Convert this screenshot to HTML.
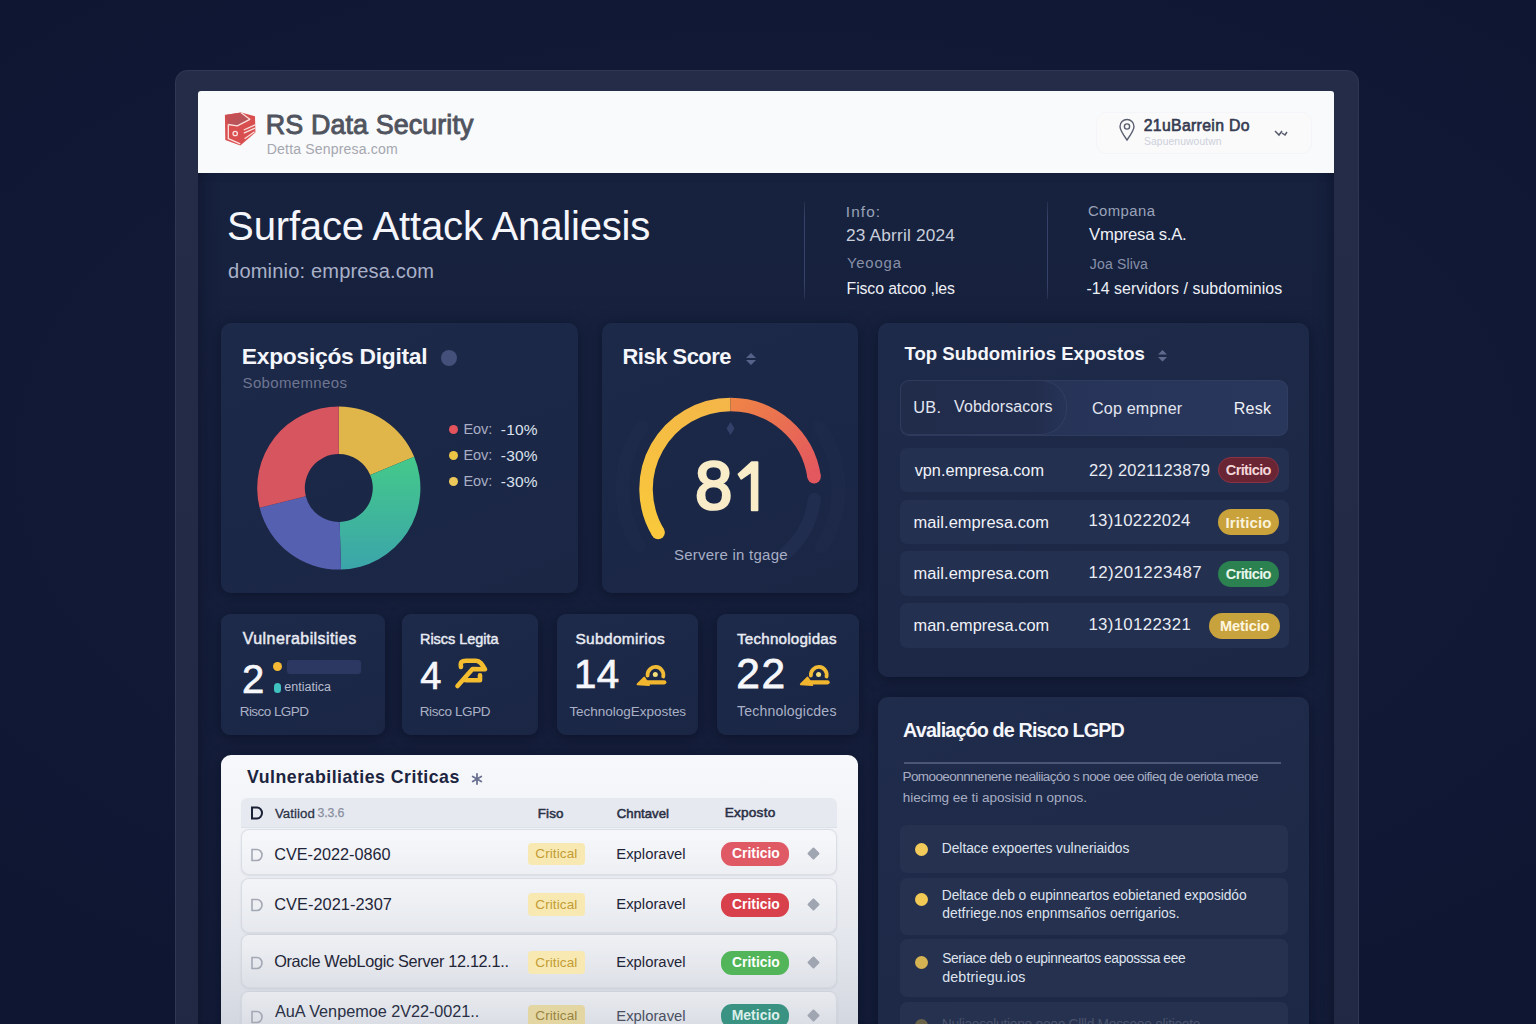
<!DOCTYPE html>
<html><head><meta charset="utf-8">
<style>
*{margin:0;padding:0;box-sizing:border-box}
html,body{width:1536px;height:1024px;overflow:hidden}
body{background:#0f1631;font-family:"Liberation Sans",sans-serif;position:relative}
.a{position:absolute;white-space:nowrap;line-height:1}
.b{position:absolute}
.card{position:absolute;border-radius:10px;background:#1b2745;box-shadow:0 2px 14px rgba(6,10,26,.55)}
</style></head><body>
<div class="b" style="left:0;top:0;width:1536px;height:1024px;background:radial-gradient(ellipse 70% 60% at 50% 45%,#131b3c 0%,#111936 60%,#0f1632 100%)"></div>
<div class="b" style="left:174.5px;top:69.5px;width:1184px;height:1010px;border-radius:12px;background:linear-gradient(180deg,#242c47 0%,#222a45 50%,#202843 100%);border:1px solid #2f3853"></div>
<div class="b" style="left:198px;top:172px;width:1135.5px;height:860px;background:linear-gradient(180deg,#17223f 0%,#16203d 40%,#141d39 100%);box-shadow:inset 12px 0 16px -8px rgba(8,12,28,.45),inset -12px 0 16px -8px rgba(8,12,28,.45)"></div>
<div class="b" style="left:198px;top:91px;width:1135.5px;height:82px;background:#f9fafb;border-radius:3px 3px 0 0"></div>
<svg class="b" style="left:218px;top:106px" width="44" height="44" viewBox="0 0 44 44">
  <defs><linearGradient id="lg1" x1="0" y1="0" x2="1" y2="1"><stop offset="0" stop-color="#d24c50"/><stop offset="1" stop-color="#a8585e"/></linearGradient></defs>
  <path d="M6.9 9 L23.2 6.4 L37 10.3 L37.4 26.6 L22.3 39.5 L7.3 34 Z" fill="#d94f50"/>
  <path d="M6.9 9 L23.2 6.4 L31.8 13.3 L19.3 19.8 L10.3 18.5 Z" fill="url(#lg1)"/>
  <g stroke="#fbe0dc" stroke-width="1.3" fill="none" stroke-linejoin="round">
  <path d="M10.3 18.5 L19.3 19.8 L31.8 13.3 L22.8 6.6"/>
  <path d="M10.3 18.5 L10.3 32.7 L22.3 37.8"/>
  <path d="M25.8 24 L37.2 18.9 M25.8 27.2 L37 22.2 M26.6 32.7 L36.5 25.8"/>
  <circle cx="17.2" cy="27.5" r="2.2"/>
  </g>
</svg>
<div class="a" style="left:265.8px;top:111.5px;font-size:26.89px;color:#50545f;-webkit-text-stroke:0.94px #50545f;letter-spacing:0.10px;">RS Data Security</div>
<div class="a" style="left:266.8px;top:142.1px;font-size:14.08px;color:#a5a7b0;letter-spacing:0.15px;">Detta Senpresa.com</div>
<div class="b" style="left:1096px;top:111.5px;width:216px;height:42px;border-radius:10px;border:1px solid rgba(228,231,237,.3);background:rgba(255,255,255,.15)"></div>
<svg class="b" style="left:1117px;top:117px" width="20" height="25" viewBox="0 0 20 25">
  <path d="M10 23 C5 16 3 13 3 9.5 A7 7 0 0 1 17 9.5 C17 13 15 16 10 23 Z" fill="none" stroke="#5a5f70" stroke-width="1.4"/>
  <circle cx="10" cy="9.5" r="2.6" fill="none" stroke="#5a5f70" stroke-width="1.4"/>
</svg>
<div class="a" style="left:1143.7px;top:117.9px;font-size:15.79px;color:#363b52;-webkit-text-stroke:0.63px #363b52;letter-spacing:0.34px;">21uBarrein Do</div>
<div class="a" style="left:1144.0px;top:137.3px;font-size:10.30px;color:#cdd0da;letter-spacing:0.12px;">Sapuenuwoutwn</div>
<svg class="b" style="left:1273px;top:126px" width="16" height="12" viewBox="0 0 16 12">
  <path d="M2 5 L6 9 L9 5 M9 7 L12 9 L14 6" fill="none" stroke="#555a6a" stroke-width="1.5"/>
</svg>
<div class="a" style="left:227.1px;top:206.8px;font-size:40.12px;color:#f4f6fb;letter-spacing:-0.21px;">Surface Attack Analiesis</div>
<div class="a" style="left:228.1px;top:261.0px;font-size:20.07px;color:#a9b1c8;letter-spacing:0.16px;">dominio: empresa.com</div>
<div class="b" style="left:804px;top:202px;width:1.2px;height:97px;background:linear-gradient(180deg,rgba(58,68,100,.4),#37426a 15%,#37426a 85%,rgba(58,68,100,.4))"></div>
<div class="b" style="left:1047px;top:202px;width:1.2px;height:97px;background:linear-gradient(180deg,rgba(58,68,100,.4),#37426a 15%,#37426a 85%,rgba(58,68,100,.4))"></div>
<div class="a" style="left:845.8px;top:203.8px;font-size:15.35px;color:#9aa2b8;letter-spacing:1.11px;">Info:</div>
<div class="a" style="left:846.0px;top:227.0px;font-size:17.29px;color:#c9cedb;letter-spacing:0.18px;">23 Abrril 2024</div>
<div class="a" style="left:846.9px;top:256.2px;font-size:14.87px;color:#8890a8;letter-spacing:0.83px;">Yeooga</div>
<div class="a" style="left:846.6px;top:280.5px;font-size:15.84px;color:#eef0f6;letter-spacing:-0.11px;">Fisco atcoo ,les</div>
<div class="a" style="left:1087.9px;top:204.1px;font-size:14.86px;color:#9aa2b8;letter-spacing:0.43px;">Compana</div>
<div class="a" style="left:1089.1px;top:227.3px;font-size:16.72px;color:#eef0f6;letter-spacing:-0.24px;">Vmpresa s.A.</div>
<div class="a" style="left:1089.8px;top:257.2px;font-size:14.00px;color:#8890a8;letter-spacing:0.16px;">Joa Sliva</div>
<div class="a" style="left:1086.5px;top:280.6px;font-size:15.95px;color:#eef0f6;letter-spacing:0.03px;">-14 servidors / subdominios</div>
<div class="card" style="left:221px;top:323px;width:357px;height:270px;background:linear-gradient(160deg,#1d2948 0%,#1b2746 60%,#1a2644 100%)"></div>
<div class="a" style="left:241.8px;top:345.4px;font-size:22.82px;color:#f4f6fb;font-weight:bold;letter-spacing:-0.27px;">Exposiçós Digital</div>
<div class="b" style="left:440.5px;top:350px;width:16px;height:16px;border-radius:50%;background:#45507a"></div>
<div class="a" style="left:242.6px;top:374.6px;font-size:15.01px;color:#6e7692;letter-spacing:0.34px;">Sobomemneos</div>
<svg class="b" style="left:0;top:0" width="1536" height="1024" viewBox="0 0 1536 1024">
<defs><linearGradient id="gg" x1="0" y1="0" x2="0" y2="1"><stop offset="0" stop-color="#44c98a"/><stop offset="1" stop-color="#3ba5aa"/></linearGradient></defs>
<path d="M338.80 406.40 A81.6 81.6 0 0 1 414.19 456.77 L370.21 474.99 A34 34 0 0 0 338.80 454.00 Z" fill="#e0b64b"/>
<path d="M414.19 456.77 A81.6 81.6 0 0 1 340.94 569.57 L339.69 521.99 A34 34 0 0 0 370.21 474.99 Z" fill="url(#gg)"/>
<path d="M340.94 569.57 A81.6 81.6 0 0 1 259.62 507.74 L305.81 496.23 A34 34 0 0 0 339.69 521.99 Z" fill="#5560b0"/>
<path d="M259.62 507.74 A81.6 81.6 0 0 1 338.80 406.40 L338.80 454.00 A34 34 0 0 0 305.81 496.23 Z" fill="#d6555f"/>
</svg>
<div class="b" style="left:448.6px;top:424.7px;width:9.6px;height:9.6px;border-radius:50%;background:#e5545c"></div>
<div class="a" style="left:463.4px;top:422.3px;font-size:14.53px;color:#a8aec4;letter-spacing:-0.06px;">Eov:</div>
<div class="a" style="left:500.8px;top:422.4px;font-size:15.48px;color:#dde2ee;letter-spacing:0.23px;">-10%</div>
<div class="b" style="left:448.6px;top:450.7px;width:9.6px;height:9.6px;border-radius:50%;background:#ecc544"></div>
<div class="a" style="left:463.4px;top:448.3px;font-size:14.53px;color:#a8aec4;letter-spacing:-0.06px;">Eov:</div>
<div class="a" style="left:500.8px;top:448.4px;font-size:15.48px;color:#dde2ee;letter-spacing:0.23px;">-30%</div>
<div class="b" style="left:448.6px;top:476.7px;width:9.6px;height:9.6px;border-radius:50%;background:#ecc85a"></div>
<div class="a" style="left:463.4px;top:474.3px;font-size:14.53px;color:#a8aec4;letter-spacing:-0.06px;">Eov:</div>
<div class="a" style="left:500.8px;top:474.4px;font-size:15.48px;color:#dde2ee;letter-spacing:0.23px;">-30%</div>
<div class="card" style="left:602px;top:323px;width:256px;height:270px;background:linear-gradient(160deg,#1d2948 0%,#1b2746 60%,#1a2644 100%)"></div>
<div class="a" style="left:622.5px;top:346.1px;font-size:21.95px;color:#f4f6fb;font-weight:bold;letter-spacing:-0.49px;">Risk Score</div>
<svg class="b" style="left:744px;top:352px" width="14" height="14" viewBox="0 0 14 14">
<path d="M7 1 L12 6 L2 6 Z M2 8 L12 8 L7 13 Z" fill="#56628a"/></svg>
<svg class="b" style="left:0;top:0" width="1536" height="1024" viewBox="0 0 1536 1024">
<defs>
<linearGradient id="g1" gradientUnits="userSpaceOnUse" x1="658.1" y1="532.5" x2="730.5" y2="404.5"><stop offset="0" stop-color="#f9c83c"/><stop offset="1" stop-color="#f4b648"/></linearGradient>
<linearGradient id="g2" gradientUnits="userSpaceOnUse" x1="730.5" y1="404.5" x2="814.1" y2="476.8"><stop offset="0" stop-color="#ef8446"/><stop offset="1" stop-color="#e3575f"/></linearGradient>
</defs>
<path d="M814.4 499.3 A84.5 84.5 0 0 1 784.8 553.7" stroke="#243052" stroke-width="13" fill="none" stroke-linecap="round" opacity=".7"/>
<path d="M638.9 546.2 A108 108 0 0 1 642.0 427.1" stroke="#222d4e" stroke-width="14" fill="none" stroke-linecap="round" opacity=".45"/>
<path d="M819.0 427.1 A108 108 0 0 1 822.1 546.2" stroke="#222d4e" stroke-width="14" fill="none" stroke-linecap="round" opacity=".45"/>
<path d="M658.1 532.5 A84.5 84.5 0 0 1 730.5 404.5" stroke="url(#g1)" stroke-width="13.5" fill="none" stroke-linecap="butt"/>
<path d="M730.5 404.5 A84.5 84.5 0 0 1 814.1 476.8" stroke="url(#g2)" stroke-width="13.5" fill="none" stroke-linecap="butt"/>
<circle cx="658.1" cy="532.5" r="6.75" fill="#f9c83c"/>
<circle cx="814.1" cy="476.8" r="6.75" fill="#e3575f"/>
<path d="M730.5 422 L734.5 428.5 L730.5 435 L726.5 428.5 Z" fill="#33406a"/>
</svg>
<div class="a" style="left:695.3px;top:451.6px;font-size:68.50px;color:#f9ecc9;-webkit-text-stroke:2.6px #f9ecc9;transform:scaleX(0.98);transform-origin:0 0;">8</div>
<svg class="b" style="left:0;top:0" width="1536" height="1024" viewBox="0 0 1536 1024"><path d="M751.8 462.3 L757.4 462.3 L757.4 510.2 L751.8 510.2 L751.8 471.5 L741.2 478.6 L738.6 474.2 Z" fill="#f9ecc9" stroke="#f9ecc9" stroke-width="2" stroke-linejoin="round" stroke-linejoin="round"/></svg>
<div class="a" style="left:674.0px;top:547.1px;font-size:14.99px;color:#a7aec6;letter-spacing:0.24px;">Servere in tgage</div>
<div class="card" style="left:878px;top:323px;width:431px;height:354px;background:linear-gradient(160deg,#1e2a49 0%,#1c2846 60%,#1b2745 100%)"></div>
<div class="a" style="left:904.5px;top:345.3px;font-size:18.60px;color:#f4f6fb;font-weight:bold;">Top Subdomirios Expostos</div>
<svg class="b" style="left:1156px;top:349px" width="13" height="14" viewBox="0 0 13 14">
<path d="M6.5 1 L11 5.5 L2 5.5 Z M2 8 L11 8 L6.5 12.5 Z" fill="#5f6a8e"/></svg>
<div class="b" style="left:899.5px;top:379.5px;width:388px;height:56px;border-radius:9px;background:linear-gradient(90deg,#243052 0%,#28355a 60%,#2a375c 100%);box-shadow:inset 0 0 0 1px rgba(55,68,100,.5)"></div>
<div class="b" style="left:900px;top:380px;width:167px;height:55px;border-radius:9px 26px 26px 9px;background:linear-gradient(90deg,#212c4b 0%,#222d4d 80%,#25315300 100%);box-shadow:inset 0 0 0 1px rgba(60,75,110,.45)"></div>
<div class="a" style="left:913.2px;top:399.0px;font-size:16.29px;color:#e2e6f0;letter-spacing:0.29px;">UB.</div>
<div class="a" style="left:954.1px;top:399.3px;font-size:15.94px;color:#e2e6f0;letter-spacing:0.09px;">Vobdorsacors</div>
<div class="a" style="left:1092.0px;top:399.7px;font-size:16.11px;color:#e2e6f0;letter-spacing:0.17px;">Cop empner</div>
<div class="a" style="left:1233.7px;top:399.7px;font-size:16.11px;color:#eef0f6;letter-spacing:0.20px;">Resk</div>
<div class="b" style="left:900px;top:447.5px;width:389px;height:44.5px;border-radius:7px;background:#233050"></div>
<div class="a" style="left:914.7px;top:461.7px;font-size:16.28px;color:#f0f2f8;">vpn.empresa.com</div>
<div class="a" style="left:1088.9px;top:461.6px;font-size:16.48px;color:#e8ebf3;letter-spacing:0.18px;">22) 2021123879</div>
<div class="b" style="left:1217.8px;top:457.0px;width:61.7px;height:26px;border-radius:13px;background:#6a2535;border:1px solid #8a3344;"></div>
<div class="a" style="left:1225.8px;top:463.2px;font-size:14.53px;color:#f3d6d8;font-weight:bold;letter-spacing:-0.62px;">Criticio</div>
<div class="b" style="left:900px;top:499.5px;width:389px;height:44.5px;border-radius:7px;background:#233050"></div>
<div class="a" style="left:913.6px;top:513.6px;font-size:16.46px;color:#f0f2f8;letter-spacing:0.07px;">mail.empresa.com</div>
<div class="a" style="left:1088.4px;top:513.3px;font-size:16.79px;color:#e8ebf3;letter-spacing:0.31px;">13)10222024</div>
<div class="b" style="left:1217.8px;top:509.0px;width:61.7px;height:26px;border-radius:13px;background:#c9a23c;"></div>
<div class="a" style="left:1225.4px;top:514.8px;font-size:15.06px;color:#fbf2dc;font-weight:bold;letter-spacing:0.14px;">Iriticio</div>
<div class="b" style="left:900px;top:551px;width:389px;height:44.5px;border-radius:7px;background:#233050"></div>
<div class="a" style="left:913.6px;top:565.1px;font-size:16.46px;color:#f0f2f8;letter-spacing:0.07px;">mail.empresa.com</div>
<div class="a" style="left:1088.4px;top:564.6px;font-size:16.95px;color:#e8ebf3;letter-spacing:0.37px;">12)201223487</div>
<div class="b" style="left:1217.8px;top:560.5px;width:61.7px;height:26px;border-radius:13px;background:#2b8150;"></div>
<div class="a" style="left:1225.8px;top:566.7px;font-size:14.53px;color:#e6f6ea;font-weight:bold;letter-spacing:-0.62px;">Criticio</div>
<div class="b" style="left:900px;top:603px;width:389px;height:44.5px;border-radius:7px;background:#233050"></div>
<div class="a" style="left:913.6px;top:617.2px;font-size:16.33px;color:#f0f2f8;letter-spacing:0.02px;">man.empresa.com</div>
<div class="a" style="left:1088.4px;top:616.8px;font-size:16.83px;color:#e8ebf3;letter-spacing:0.32px;">13)10122321</div>
<div class="b" style="left:1209px;top:612.5px;width:70.5px;height:26px;border-radius:13px;background:#c8a23c;"></div>
<div class="a" style="left:1220.0px;top:618.7px;font-size:14.53px;color:#fff6e0;font-weight:bold;letter-spacing:-0.09px;">Meticio</div>
<div class="card" style="left:220.5px;top:613.5px;width:164px;height:121.5px;border-radius:9px;background:linear-gradient(160deg,#1e2a49 0%,#1b2746 70%,#1a2644 100%)"></div>
<div class="card" style="left:402px;top:613.5px;width:135.5px;height:121.5px;border-radius:9px;background:linear-gradient(160deg,#1e2a49 0%,#1b2746 70%,#1a2644 100%)"></div>
<div class="card" style="left:557px;top:613.5px;width:141px;height:121.5px;border-radius:9px;background:linear-gradient(160deg,#1e2a49 0%,#1b2746 70%,#1a2644 100%)"></div>
<div class="card" style="left:717px;top:613.5px;width:141.5px;height:121.5px;border-radius:9px;background:linear-gradient(160deg,#1e2a49 0%,#1b2746 70%,#1a2644 100%)"></div>
<div class="a" style="left:242.8px;top:630.6px;font-size:15.99px;color:#e8ebf3;-webkit-text-stroke:0.48px #e8ebf3;letter-spacing:0.43px;">Vulnerabilsities</div>
<div class="a" style="left:242.0px;top:658.7px;font-size:40.00px;color:#f6f7fb;-webkit-text-stroke:0.72px #f6f7fb;transform:scaleX(1.0);transform-origin:0 0;">2</div>
<div class="b" style="left:272.7px;top:661.7px;width:9px;height:9px;border-radius:50%;background:#f5b935"></div>
<div class="b" style="left:287px;top:660px;width:74px;height:13.5px;border-radius:3px;background:#2d3862"></div>
<div class="b" style="left:273.5px;top:683px;width:7px;height:10px;border-radius:4px;background:#3fc2c0"></div>
<div class="a" style="left:284.3px;top:681.4px;font-size:12.47px;color:#b8bdd0;letter-spacing:0.04px;">entiatica</div>
<div class="a" style="left:239.7px;top:704.9px;font-size:13.52px;color:#aab1c6;letter-spacing:-0.56px;">Risco LGPD</div>
<div class="a" style="left:420.0px;top:631.8px;font-size:14.53px;color:#e8ebf3;-webkit-text-stroke:0.44px #e8ebf3;letter-spacing:-0.05px;">Riscs Legita</div>
<div class="a" style="left:420.3px;top:656.6px;font-size:38.00px;color:#f6f7fb;-webkit-text-stroke:0.68px #f6f7fb;">4</div>
<div class="a" style="left:419.7px;top:704.9px;font-size:13.52px;color:#aab1c6;letter-spacing:-0.38px;">Risco LGPD</div>
<div class="a" style="left:575.4px;top:631.0px;font-size:15.47px;color:#e8ebf3;-webkit-text-stroke:0.46px #e8ebf3;letter-spacing:0.34px;">Subdomirios</div>
<div class="a" style="left:574.1px;top:655.1px;font-size:40.30px;color:#f6f7fb;-webkit-text-stroke:0.73px #f6f7fb;letter-spacing:0.22px;">14</div>
<div class="a" style="left:569.4px;top:704.9px;font-size:13.52px;color:#aab1c6;letter-spacing:-0.03px;">TechnologExpostes</div>
<div class="a" style="left:737.0px;top:631.3px;font-size:15.16px;color:#e8ebf3;-webkit-text-stroke:0.45px #e8ebf3;letter-spacing:0.22px;">Technologidas</div>
<div class="a" style="left:736.2px;top:653.0px;font-size:42.49px;color:#f6f7fb;-webkit-text-stroke:0.76px #f6f7fb;letter-spacing:1.70px;">22</div>
<div class="a" style="left:737.0px;top:704.4px;font-size:14.07px;color:#aab1c6;letter-spacing:0.19px;">Technologicdes</div>
<svg class="b" style="left:0;top:0" width="1536" height="1024" viewBox="0 0 1536 1024">
<path d="M461 667 C460 661.5 462 660.8 466 660.8 L476 660.8 C480 660.8 482 664 485 669.3 L472.5 669 L457.5 686 M465.8 680.3 L480 680.3 L480 675.3" fill="none" stroke="#f4bd30" stroke-width="4.6" stroke-linecap="round" stroke-linejoin="round"/>
<g transform="translate(0,0)">
<path d="M647.6 675.5 A7.9 7.9 0 1 1 663.2 676.5" fill="none" stroke="#f2bb36" stroke-width="3.8" stroke-linecap="round"/>
<path d="M664.3 682.3 L646 682.3" fill="none" stroke="#f2b52e" stroke-width="4.2" stroke-linecap="round"/>
<path d="M644.2 677.6 L637.6 684.3 L649 685 Z" fill="#f2b52e" stroke="#f2b52e" stroke-width="2" stroke-linejoin="round"/>
<circle cx="655.3" cy="674.5" r="2.5" fill="#f3e07a"/>
</g><g transform="translate(163.3,0)">
<path d="M647.6 675.5 A7.9 7.9 0 1 1 663.2 676.5" fill="none" stroke="#f2bb36" stroke-width="3.8" stroke-linecap="round"/>
<path d="M664.3 682.3 L646 682.3" fill="none" stroke="#f2b52e" stroke-width="4.2" stroke-linecap="round"/>
<path d="M644.2 677.6 L637.6 684.3 L649 685 Z" fill="#f2b52e" stroke="#f2b52e" stroke-width="2" stroke-linejoin="round"/>
<circle cx="655.3" cy="674.5" r="2.5" fill="#f3e07a"/>
</g>
</svg>
<div class="card" style="left:220.5px;top:754.5px;width:637.5px;height:300px;border-radius:10px;background:linear-gradient(180deg,#f7f8fb 0%,#f0f2f6 30%,#e2e5eb 65%,#d4d8e0 88%,#ccd0d9 100%)"></div>
<div class="a" style="left:247.1px;top:768.7px;font-size:17.73px;color:#1c2440;font-weight:bold;letter-spacing:0.50px;">Vulnerabiliaties Criticas</div>
<svg class="b" style="left:470px;top:772px" width="14" height="14" viewBox="0 0 14 14">
<path d="M7 2 L7 12 M2.7 4.5 L11.3 9.5 M2.7 9.5 L11.3 4.5" stroke="#6a7090" stroke-width="1.8" fill="none" stroke-linecap="round"/></svg>
<div class="b" style="left:240.5px;top:798px;width:596.5px;height:30px;border-radius:6px 6px 0 0;background:#e6e9f0;border-bottom:1px solid #dde1e9"></div>
<svg class="b" style="left:250px;top:806px" width="14" height="14" viewBox="0 0 14 14">
<path d="M2 1.5 L7 1.5 A5 5.5 0 0 1 7 12.5 L2 12.5 Z" fill="none" stroke="#1a2035" stroke-width="2"/></svg>
<div class="a" style="left:274.9px;top:806.5px;font-size:13.26px;color:#2a3045;-webkit-text-stroke:0.27px #2a3045;letter-spacing:0.06px;">Vatiiod</div>
<div class="a" style="left:317.5px;top:807.2px;font-size:12.35px;color:#8a90a0;-webkit-text-stroke:0.25px #8a90a0;letter-spacing:-0.12px;">3.3.6</div>
<div class="a" style="left:537.8px;top:806.5px;font-size:13.36px;color:#2a3045;-webkit-text-stroke:0.53px #2a3045;letter-spacing:0.11px;">Fiso</div>
<div class="a" style="left:616.8px;top:806.7px;font-size:13.16px;color:#2a3045;-webkit-text-stroke:0.53px #2a3045;letter-spacing:0.03px;">Chntavel</div>
<div class="a" style="left:724.7px;top:806.3px;font-size:13.64px;color:#2a3045;-webkit-text-stroke:0.55px #2a3045;letter-spacing:0.22px;">Exposto</div>
<div class="b" style="left:240.5px;top:828.5px;width:596.5px;height:46.3px;border-radius:8px;background:linear-gradient(180deg,rgba(255,255,255,.38),rgba(255,255,255,.06));border:1px solid rgba(195,200,212,.5);box-shadow:0 1px 2px rgba(120,130,150,.15)"></div>
<svg class="b" style="left:250px;top:847.7px" width="14" height="14" viewBox="0 0 14 14"><path d="M2 1.5 L7 1.5 A5 5.5 0 0 1 7 12.5 L2 12.5 Z" fill="none" stroke="#a4a8b4" stroke-width="1.6"/></svg>
<div class="a" style="left:274.2px;top:845.8px;font-size:16.28px;color:#1f2538;letter-spacing:-0.02px;">CVE-2022-0860</div>
<div class="b" style="left:527.5px;top:842.7px;width:57px;height:22.5px;border-radius:4px;background:#f8e9b2"></div>
<div class="a" style="left:535.3px;top:847.3px;font-size:13.56px;color:#c39c34;letter-spacing:0.09px;">Critical</div>
<div class="a" style="left:616.3px;top:846.8px;font-size:14.85px;color:#1f2538;">Exploravel</div>
<div class="b" style="left:721px;top:842.2px;width:67.5px;height:24px;border-radius:11px;background:#e05a66"></div>
<div class="a" style="left:732.0px;top:847.3px;font-size:13.85px;color:#ffffff;font-weight:bold;letter-spacing:0.01px;">Criticio</div>
<div class="b" style="left:808.5px;top:849.2px;width:9px;height:9px;background:#a0a5b2;transform:rotate(45deg);border-radius:1px"></div>
<div class="b" style="left:240.5px;top:877.5px;width:596.5px;height:55.0px;border-radius:8px;background:linear-gradient(180deg,rgba(255,255,255,.38),rgba(255,255,255,.06));border:1px solid rgba(195,200,212,.5);box-shadow:0 1px 2px rgba(120,130,150,.15)"></div>
<svg class="b" style="left:250px;top:898.1px" width="14" height="14" viewBox="0 0 14 14"><path d="M2 1.5 L7 1.5 A5 5.5 0 0 1 7 12.5 L2 12.5 Z" fill="none" stroke="#a4a8b4" stroke-width="1.6"/></svg>
<div class="a" style="left:274.2px;top:896.0px;font-size:16.36px;color:#1f2538;letter-spacing:0.03px;">CVE-2021-2307</div>
<div class="b" style="left:527.5px;top:893.1px;width:57px;height:22.5px;border-radius:4px;background:#f8e9b2"></div>
<div class="a" style="left:535.3px;top:897.7px;font-size:13.56px;color:#c39c34;letter-spacing:0.09px;">Critical</div>
<div class="a" style="left:616.3px;top:897.2px;font-size:14.85px;color:#1f2538;">Exploravel</div>
<div class="b" style="left:721px;top:892.6px;width:67.5px;height:24px;border-radius:11px;background:#d8404b"></div>
<div class="a" style="left:732.0px;top:897.7px;font-size:13.85px;color:#ffffff;font-weight:bold;letter-spacing:0.01px;">Criticio</div>
<div class="b" style="left:808.5px;top:899.6px;width:9px;height:9px;background:#a0a5b2;transform:rotate(45deg);border-radius:1px"></div>
<div class="b" style="left:240.5px;top:934px;width:596.5px;height:54.3px;border-radius:8px;background:linear-gradient(180deg,rgba(255,255,255,.38),rgba(255,255,255,.06));border:1px solid rgba(195,200,212,.5);box-shadow:0 1px 2px rgba(120,130,150,.15)"></div>
<svg class="b" style="left:250px;top:956.1px" width="14" height="14" viewBox="0 0 14 14"><path d="M2 1.5 L7 1.5 A5 5.5 0 0 1 7 12.5 L2 12.5 Z" fill="none" stroke="#a4a8b4" stroke-width="1.6"/></svg>
<div class="a" style="left:274.2px;top:953.2px;font-size:16.28px;color:#1f2538;letter-spacing:-0.32px;">Oracle WebLogic Server 12.12.1..</div>
<div class="b" style="left:527.5px;top:951.1px;width:57px;height:22.5px;border-radius:4px;background:#f8e9b2"></div>
<div class="a" style="left:535.3px;top:955.7px;font-size:13.56px;color:#c39c34;letter-spacing:0.09px;">Critical</div>
<div class="a" style="left:616.3px;top:955.2px;font-size:14.85px;color:#1f2538;">Exploravel</div>
<div class="b" style="left:721px;top:950.6px;width:67.5px;height:24px;border-radius:11px;background:#52b55a"></div>
<div class="a" style="left:732.0px;top:955.7px;font-size:13.85px;color:#ffffff;font-weight:bold;letter-spacing:0.01px;">Criticio</div>
<div class="b" style="left:808.5px;top:957.6px;width:9px;height:9px;background:#a0a5b2;transform:rotate(45deg);border-radius:1px"></div>
<div class="b" style="left:240.5px;top:991px;width:596.5px;height:55.0px;border-radius:8px;background:linear-gradient(180deg,rgba(255,255,255,.38),rgba(255,255,255,.06));border:1px solid rgba(195,200,212,.5);box-shadow:0 1px 2px rgba(120,130,150,.15)"></div>
<svg class="b" style="left:250px;top:1009.5px" width="14" height="14" viewBox="0 0 14 14"><path d="M2 1.5 L7 1.5 A5 5.5 0 0 1 7 12.5 L2 12.5 Z" fill="none" stroke="#a4a8b4" stroke-width="1.6"/></svg>
<div class="a" style="left:275.0px;top:1003.2px;font-size:16.28px;color:#2a3045;letter-spacing:-0.04px;">AuA Venpemoe 2V22-0021..</div>
<div class="b" style="left:527.5px;top:1004.5px;width:57px;height:22.5px;border-radius:4px;background:#e3d6a3"></div>
<div class="a" style="left:535.3px;top:1009.1px;font-size:13.56px;color:#988440;letter-spacing:0.09px;">Critical</div>
<div class="a" style="left:616.3px;top:1008.6px;font-size:14.85px;color:#4a5062;">Exploravel</div>
<div class="b" style="left:721px;top:1004.0px;width:67.5px;height:24px;border-radius:11px;background:#3a9282"></div>
<div class="a" style="left:731.7px;top:1009.0px;font-size:13.91px;color:#dcefea;font-weight:bold;letter-spacing:0.04px;">Meticio</div>
<div class="b" style="left:808.5px;top:1011.0px;width:9px;height:9px;background:#a0a5b2;transform:rotate(45deg);border-radius:1px"></div>
<div class="card" style="left:878px;top:697px;width:431px;height:360px;background:linear-gradient(160deg,#202c4b 0%,#1d2947 60%,#1c2846 100%)"></div>
<div class="a" style="left:903.1px;top:721.3px;font-size:19.77px;color:#f4f6fb;font-weight:bold;letter-spacing:-0.87px;">Avaliaçóo de Risco LGPD</div>
<div class="b" style="left:903.5px;top:761.5px;width:377px;height:2px;background:#4b5676"></div>
<div class="a" style="left:902.5px;top:769.6px;font-size:13.52px;color:#a8aec4;letter-spacing:-0.59px;">Pomooeonnnenene nealiiaçóo s nooe oee oifieq de oeriota meoe</div>
<div class="a" style="left:902.7px;top:791.0px;font-size:13.52px;color:#a8aec4;letter-spacing:-0.02px;">hiecimg ee ti aposisid n opnos.</div>
<div class="b" style="left:899.5px;top:825px;width:388.5px;height:47.5px;border-radius:7px;background:#25314f"></div>
<div class="b" style="left:915px;top:842.6px;width:13px;height:13px;border-radius:50%;background:#f3cb5a"></div>
<div class="a" style="left:941.8px;top:842.0px;font-size:13.81px;color:#dfe3ee;letter-spacing:-0.04px;">Deltace expoertes vulneriaidos</div>
<div class="b" style="left:899.5px;top:877.7px;width:388.5px;height:56.9px;border-radius:7px;background:#25314f"></div>
<div class="b" style="left:915px;top:892.5px;width:13px;height:13px;border-radius:50%;background:#f3c955"></div>
<div class="a" style="left:941.8px;top:889.3px;font-size:13.81px;color:#dfe3ee;letter-spacing:-0.06px;">Deltace deb o eupinneartos eobietaned exposidóo</div>
<div class="a" style="left:942.3px;top:907.4px;font-size:13.86px;color:#dfe3ee;letter-spacing:0.02px;">detfriege.nos enpnmsaños oerrigarios.</div>
<div class="b" style="left:899.5px;top:939.1px;width:388.5px;height:57.9px;border-radius:7px;background:#25314f"></div>
<div class="b" style="left:915px;top:955.5px;width:13px;height:13px;border-radius:50%;background:#d6b352"></div>
<div class="a" style="left:942.3px;top:952.3px;font-size:13.81px;color:#dfe3ee;letter-spacing:-0.40px;">Seriace deb o eupinneartos eaposssa eee</div>
<div class="a" style="left:942.3px;top:969.8px;font-size:14.22px;color:#dfe3ee;letter-spacing:0.13px;">debtriegu.ios</div>
<div class="b" style="left:899.5px;top:1002px;width:388.5px;height:58.0px;border-radius:7px;background:#25314f"></div>
<div class="b" style="left:915px;top:1018.9px;width:13px;height:13px;border-radius:50%;background:#6a6248"></div>
<div class="a" style="left:941.8px;top:1018.3px;font-size:13.81px;color:#4a536c;letter-spacing:-0.28px;">Nuliaesolutione oeoo Cllld Mosseoe olitieete</div>
</body></html>
